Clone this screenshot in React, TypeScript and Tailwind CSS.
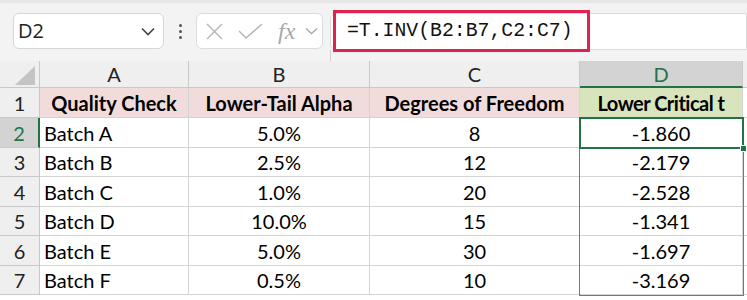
import React from "react";

const cellFont = { fontFamily: "Lato, 'Liberation Sans', sans-serif" };

const rows = [
  ["Batch A", "5.0%", "8", "-1.860"],
  ["Batch B", "2.5%", "12", "-2.179"],
  ["Batch C", "1.0%", "20", "-2.528"],
  ["Batch D", "10.0%", "15", "-1.341"],
  ["Batch E", "5.0%", "30", "-1.697"],
  ["Batch F", "0.5%", "10", "-3.169"],
];
const heights = ["h-[30px]", "h-[29px]", "h-[30px]", "h-[29px]", "h-[30px]", "h-[29px]"];

export default function App() {
  return (
    <div className="relative w-[747px] h-[300px] overflow-hidden bg-white" style={cellFont}>
      {/* Toolbar */}
      <div className="relative h-[61px] bg-[#f3f3f3] border-t-[3px] border-[#e6e6e6] flex items-start pl-[13px] pt-[10px]">
        <div className="w-[151px] h-[36px] bg-white border border-[#d6d6d6] rounded-[6px] flex items-center justify-between pl-[4px] pr-[8px]">
          <span className="text-[20px] text-[#222]" style={{ fontFamily: "'Open Sans', 'Noto Sans', sans-serif" }}>D2</span>
          <svg width="14" height="9" viewBox="0 0 14 9"><path d="M1 1.5 L7 7.5 L13 1.5" fill="none" stroke="#444" strokeWidth="1.6" /></svg>
        </div>
        <div className="w-[32px] h-[36px] flex flex-col items-center justify-center gap-[3px]">
          <div className="w-[3px] h-[3px] rounded-full bg-[#555]" />
          <div className="w-[3px] h-[3px] rounded-full bg-[#555]" />
          <div className="w-[3px] h-[3px] rounded-full bg-[#555]" />
        </div>
        <div className="w-[127px] h-[36px] bg-white border border-[#dcdcdc] rounded-[6px] flex items-center pl-[9px]">
          <svg width="17" height="17" viewBox="0 0 17 17"><path d="M1 1 L16 16 M16 1 L1 16" stroke="#b5b5b5" strokeWidth="1.4" /></svg>
          <svg className="ml-[15px]" width="25" height="17" viewBox="0 0 25 17"><path d="M1 8 L8 15 L24 1" fill="none" stroke="#b5b5b5" strokeWidth="1.4" /></svg>
          <span className="ml-[15px] text-[24px] italic text-[#a8a8a8] leading-none" style={{ fontFamily: "'Liberation Serif', serif" }}>fx</span>
          <svg className="ml-[10px]" width="13" height="8" viewBox="0 0 13 8"><path d="M1 1.5 L6.5 6.5 L12 1.5" fill="none" stroke="#aaa" strokeWidth="1.4" /></svg>
        </div>
        <div className="ml-[7px] flex-1 h-[37px] bg-white border border-[#dcdcdc] rounded-l-[6px] flex items-center pl-[16px]">
          <span className="text-[19.8px] text-[#111]" style={{ fontFamily: "'Liberation Mono', monospace" }}>=T.INV(B2:B7,C2:C7)</span>
        </div>
        <div className="absolute left-[330px] top-[47px] w-[1px] h-[11px] bg-[#d0d0d0]" />
        <div className="absolute left-[333px] top-[7px] w-[257px] h-[42px] border-[3px] border-[#e0234e]" />
      </div>

      {/* Grid */}
      <div className="grid grid-cols-[40px_149px_181px_210px_163px_1fr] text-[20px] text-black">
        {/* column header */}
        <div className="h-[27px] bg-[#efefef] border-r border-b border-[#c9c9c9] relative">
          <svg className="absolute left-[15px] top-[5px]" width="20" height="19" viewBox="0 0 20 19"><path d="M20 0 L20 19 L0 19 Z" fill="#c4c4c4" /></svg>
        </div>
        {["A", "B", "C"].map((c) => (
          <div key={c} className="h-[27px] bg-[#efefef] border-r border-b border-[#c9c9c9] flex items-center justify-center text-[#222]">{c}</div>
        ))}
        <div className="h-[27px] bg-[#d3d3d3] border-r border-[#c9c9c9] border-b-2 border-b-[#217346] flex items-center justify-center text-[#217346]">D</div>
        <div className="h-[27px] bg-[#efefef] border-b border-[#c9c9c9]" />

        {/* header row 1 */}
        <div className="h-[30px] bg-[#efefef] border-r border-b border-[#c9c9c9] flex items-center justify-center text-[#222]">1</div>
        {["Quality Check", "Lower-Tail Alpha", "Degrees of Freedom"].map((h) => (
          <div key={h} className="h-[30px] bg-[#f2dcdb] border-r border-b border-[#d4d4d4] flex items-center justify-center font-bold">{h}</div>
        ))}
        <div className="h-[30px] bg-[#d8e4bc] border-r border-b border-[#d4d4d4] flex items-center justify-center font-bold tracking-[-0.5px]">Lower Critical t</div>
        <div className="h-[30px] border-b border-[#d4d4d4]" />

        {rows.map((r, i) => {
          const sel = i === 0;
          return (
            <React.Fragment key={i}>
              <div className={`${heights[i]} border-b flex items-center justify-center ${sel ? "bg-[#d3d3d3] text-[#217346] border-r-2 border-r-[#217346] border-b-[#c9c9c9]" : "bg-[#efefef] text-[#222] border-r border-[#c9c9c9]"}`}>{i + 2}</div>
              <div className={`${heights[i]} border-r border-b border-[#d4d4d4] flex items-center pl-[4px]`}>{r[0]}</div>
              <div className={`${heights[i]} border-r border-b border-[#d4d4d4] flex items-center justify-center`}>{r[1]}</div>
              <div className={`${heights[i]} border-r border-b border-[#d4d4d4] flex items-center justify-center`}>{r[2]}</div>
              <div className={`${heights[i]} border-r border-b border-[#d4d4d4] flex items-center justify-center`}>{r[3]}</div>
              <div className={`${heights[i]} border-b border-[#d4d4d4]`} />
            </React.Fragment>
          );
        })}
      </div>

      {/* selection overlays */}
      <div className="absolute left-[579px] top-[117px] w-[165px] h-[179px] border-[1.5px] border-[#4a7bd0]" />
      <div className="absolute left-[579px] top-[117px] w-[165px] h-[32px] border-2 border-[#217346]" />
      <div className="absolute left-[740px] top-[145px] w-[7px] h-[7px] bg-[#217346] border border-white" />
    </div>
  );
}
